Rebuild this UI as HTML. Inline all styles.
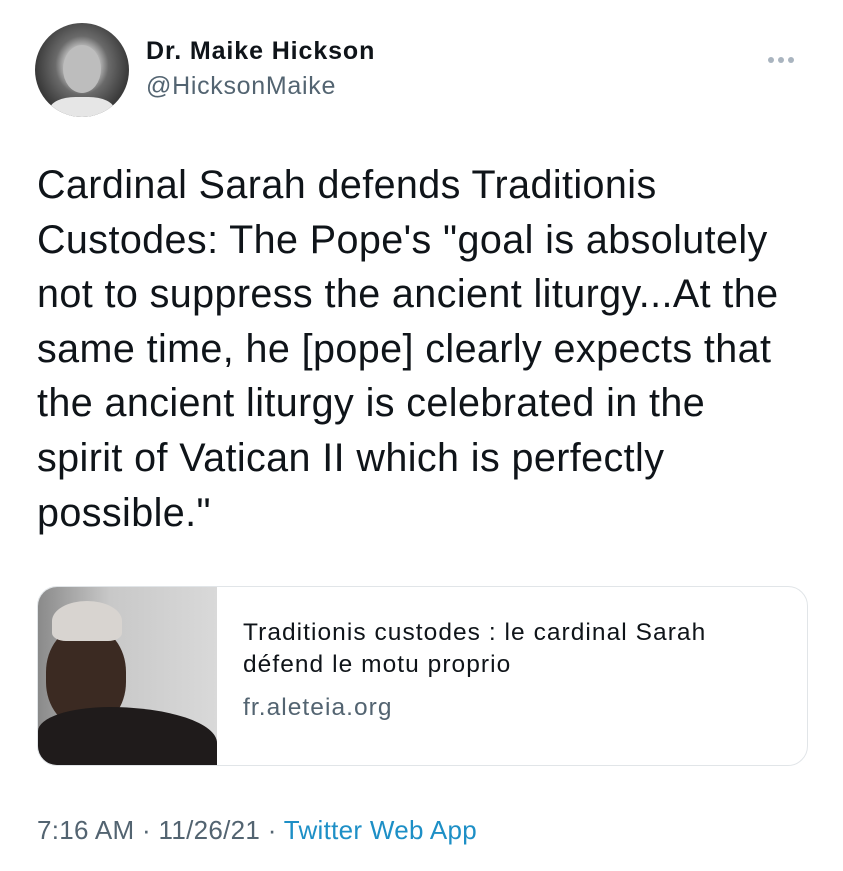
<!DOCTYPE html>
<html><head><style>
body{margin:0;width:843px;height:871px;background:#fff;font-family:"Liberation Sans",Arial,sans-serif;position:relative;overflow:hidden;color:#0f1419}
.abs{position:absolute}
.av{left:35px;top:23px;width:94px;height:94px;border-radius:50%;background:radial-gradient(ellipse at 50% 45%,#cfcfcf 0 22%,#6a6a6a 40%,#3a3a3a 70%);overflow:hidden}
.name{left:146px;top:37px;font-size:25px;font-weight:bold;letter-spacing:0.9px}
.handle{left:146px;top:72px;font-size:25px;color:#536471;letter-spacing:0.7px}
.dots{left:768px;top:50px}
.dots i{display:inline-block;width:6px;height:6px;border-radius:50%;background:#a9b4bf;margin-right:4px}
.txt{left:37px;top:158px;font-size:39.5px;line-height:54.6px;letter-spacing:0.4px;white-space:nowrap}
.card{left:37px;top:586px;width:769px;height:178px;border:1px solid #e1e5e8;border-radius:20px;overflow:hidden}
.img{left:0;top:0;width:179px;height:178px;background:linear-gradient(90deg,#8a8a8a,#c8c8c8 40%,#d9d9d9)}
.t{left:205px;font-size:24.5px;letter-spacing:1.05px;white-space:nowrap}
.foot{left:37px;top:815px;font-size:26px;color:#536471;letter-spacing:0.3px}
</style></head><body>
<div class="abs av"><div class="abs" style="left:28px;top:22px;width:38px;height:48px;border-radius:50%;background:#bdbdbd"></div><div class="abs" style="left:15px;top:74px;width:64px;height:30px;border-radius:40% 40% 0 0;background:#e6e6e6"></div></div>
<div class="abs name">Dr. Maike Hickson</div>
<div class="abs handle">@HicksonMaike</div>
<div class="abs dots"><i></i><i></i><i></i></div>
<div class="abs txt">Cardinal Sarah defends Traditionis<br>Custodes: The Pope's "goal is absolutely<br>not to suppress the ancient liturgy...At the<br>same time, he [pope] clearly expects that<br>the ancient liturgy is celebrated in the<br>spirit of Vatican II which is perfectly<br>possible."</div>
<div class="abs card">
<div class="abs img">
<div class="abs" style="left:8px;top:40px;width:80px;height:100px;border-radius:45%;background:#3b2a22"></div>
<div class="abs" style="left:14px;top:14px;width:70px;height:40px;border-radius:50% 50% 20% 20%;background:#d8d4d0"></div>
<div class="abs" style="left:0;top:120px;width:179px;height:60px;border-radius:40% 60% 0 0;background:#1f1b1b"></div>
</div>
<div class="abs t" style="top:32px;color:#0f1419">Traditionis custodes : le cardinal Sarah</div>
<div class="abs t" style="top:64px;color:#0f1419">défend le motu proprio</div>
<div class="abs t" style="top:107px;color:#536471">fr.aleteia.org</div>
</div>
<div class="abs foot">7:16 AM · 11/26/21 · <span style="color:#1d8fc6">Twitter Web App</span></div>
</body></html>
